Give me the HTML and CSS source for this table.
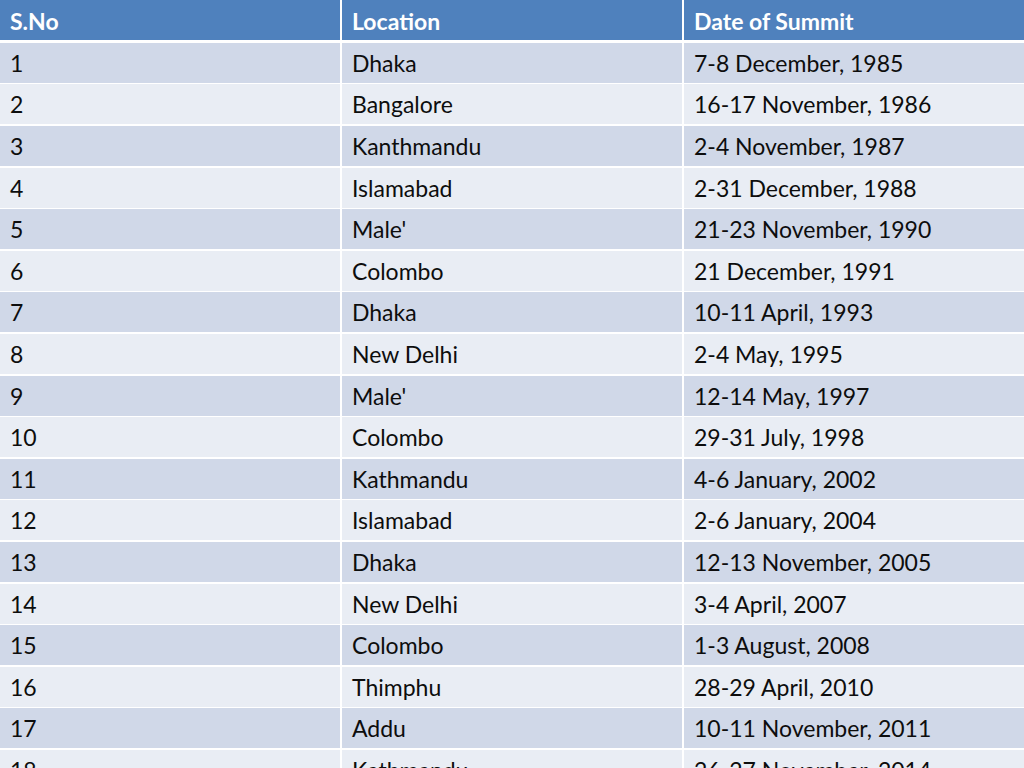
FILE: index.html
```html
<!DOCTYPE html>
<html>
<head>
<meta charset="utf-8">
<link rel="stylesheet" href="styles.css">
</head>
<body>
<div class="table">
  <div class="row head"><div class="cell">S.No</div><div class="cell">Location</div><div class="cell">Date of Summit</div></div>
  <div class="row odd"><div class="cell">1</div><div class="cell">Dhaka</div><div class="cell">7-8 December, 1985</div></div>
  <div class="row even"><div class="cell">2</div><div class="cell">Bangalore</div><div class="cell">16-17 November, 1986</div></div>
  <div class="row odd"><div class="cell">3</div><div class="cell">Kanthmandu</div><div class="cell">2-4 November, 1987</div></div>
  <div class="row even"><div class="cell">4</div><div class="cell">Islamabad</div><div class="cell">2-31 December, 1988</div></div>
  <div class="row odd"><div class="cell">5</div><div class="cell">Male'</div><div class="cell">21-23 November, 1990</div></div>
  <div class="row even"><div class="cell">6</div><div class="cell">Colombo</div><div class="cell">21 December, 1991</div></div>
  <div class="row odd"><div class="cell">7</div><div class="cell">Dhaka</div><div class="cell">10-11 April, 1993</div></div>
  <div class="row even"><div class="cell">8</div><div class="cell">New Delhi</div><div class="cell">2-4 May, 1995</div></div>
  <div class="row odd"><div class="cell">9</div><div class="cell">Male'</div><div class="cell">12-14 May, 1997</div></div>
  <div class="row even"><div class="cell">10</div><div class="cell">Colombo</div><div class="cell">29-31 July, 1998</div></div>
  <div class="row odd"><div class="cell">11</div><div class="cell">Kathmandu</div><div class="cell">4-6 January, 2002</div></div>
  <div class="row even"><div class="cell">12</div><div class="cell">Islamabad</div><div class="cell">2-6 January, 2004</div></div>
  <div class="row odd"><div class="cell">13</div><div class="cell">Dhaka</div><div class="cell">12-13 November, 2005</div></div>
  <div class="row even"><div class="cell">14</div><div class="cell">New Delhi</div><div class="cell">3-4 April, 2007</div></div>
  <div class="row odd"><div class="cell">15</div><div class="cell">Colombo</div><div class="cell">1-3 August, 2008</div></div>
  <div class="row even"><div class="cell">16</div><div class="cell">Thimphu</div><div class="cell">28-29 April, 2010</div></div>
  <div class="row odd"><div class="cell">17</div><div class="cell">Addu</div><div class="cell">10-11 November, 2011</div></div>
  <div class="row even"><div class="cell">18</div><div class="cell">Kathmandu</div><div class="cell">26-27 November, 2014</div></div>
</div>
</body>
</html>
```
FILE: styles.css
```css
html, body {
  margin: 0;
  padding: 0;
  background: #ffffff;
  overflow: hidden;
}
.table {
  display: flex;
  flex-direction: column;
  gap: 1.6px;
  font-family: Lato, "Open Sans", sans-serif;
  font-size: 23px;
  color: #0d0d0d;
}
.row {
  display: grid;
  grid-template-columns: 1fr 1fr 1fr;
  column-gap: 2px;
  height: 40px;
}
.cell {
  display: flex;
  align-items: center;
  padding-left: 10px;
  white-space: nowrap;
}
.head {
  margin-bottom: 1.2px;
}
.head .cell {
  background: #4f81bd;
  color: #ffffff;
  font-weight: bold;
  padding-top: 1px;
}
.odd .cell {
  background: #d0d8e8;
}
.even .cell {
  background: #e9edf4;
}
```
